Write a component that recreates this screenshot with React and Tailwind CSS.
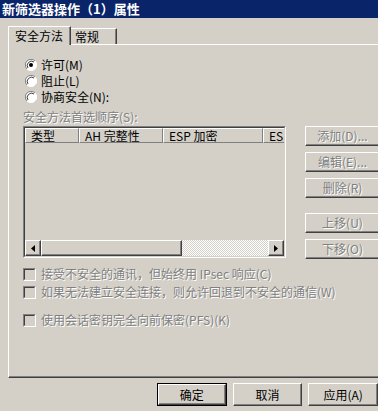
import React from "react";

const raised =
  "border border-t-white border-l-white border-r-[#404040] border-b-[#404040] shadow-[inset_-1px_-1px_0_#808080]";
const dis = "text-[#808080] [text-shadow:1px_1px_0_#fff]";

function Radio({ checked, label }) {
  return (
    <div className="flex items-center h-[16px] ml-[2px]">
      <svg width="12" height="12" viewBox="0 0 12 12" className="shrink-0">
        <circle cx="6" cy="6" r="5.5" fill="#fff" />
        <path d="M10 2 A5.5 5.5 0 0 0 2 10" stroke="#808080" strokeWidth="1" fill="none" />
        <path d="M9 3 A4.3 4.3 0 0 0 3 9" stroke="#404040" strokeWidth="1" fill="none" />
        <path d="M2 10 A5.5 5.5 0 0 0 10 2" stroke="#fff" strokeWidth="1" fill="none" />
        {checked && <circle cx="6" cy="6" r="2" fill="#000" />}
      </svg>
      <span className="ml-[4px] text-black">{label}</span>
    </div>
  );
}

function Check({ label, className = "" }) {
  return (
    <div className={`flex items-center h-[16px] ${className}`}>
      <div className="w-[13px] h-[13px] border border-t-[#808080] border-l-[#808080] border-b-white border-r-white shrink-0">
        <div className="w-full h-full border border-t-[#404040] border-l-[#404040] border-b-[#d4d0c8] border-r-[#d4d0c8]" />
      </div>
      <span className={`ml-[5px] ${dis}`}>{label}</span>
    </div>
  );
}

function SideButton({ label, className = "" }) {
  return (
    <div className={`w-[75px] h-[20px] flex items-center justify-center shrink-0 ${raised} ${className}`}>
      <span className={dis}>{label}</span>
    </div>
  );
}

function Arrow({ dir }) {
  return (
    <div className={`w-[16px] h-full flex items-center justify-center shrink-0 ${raised}`}>
      <svg width="4" height="7" viewBox="0 0 4 7">
        {dir === "left" ? <path d="M4 0 L0 3.5 L4 7 Z" fill="#000" /> : <path d="M0 0 L4 3.5 L0 7 Z" fill="#000" />}
      </svg>
    </div>
  );
}

export default function App() {
  const cols = [
    { label: "类型", w: "w-[54px]" },
    { label: "AH 完整性", w: "w-[84px]" },
    { label: "ESP 加密", w: "w-[100px]" },
    { label: "ESP 完整性", w: "w-[100px]" },
  ];

  return (
    <div
      className="w-[378px] h-[411px] bg-[#d4d0c8] overflow-hidden text-[12px] leading-[14px] text-black"
      style={{ fontFamily: '"Noto Sans CJK SC", "Liberation Sans", sans-serif' }}
    >
      <div className="h-[18px] bg-[#0a246a] text-white font-bold text-[13px] leading-[18px] pl-[2px] whitespace-nowrap">
        新筛选器操作（1）属性
      </div>

      <div className="pl-[8px] mt-[8px]">
        <div className="flex -mb-px relative z-10">
          <div className="h-[19px] w-[63px] bg-[#d4d0c8] border-t border-l border-t-white border-l-white border-r border-r-[#404040] shadow-[inset_-1px_0_0_#808080] flex items-center pl-[6px]">
            安全方法
          </div>
          <div className="mt-[2px] h-[16px] w-[46px] bg-[#d4d0c8] border-t border-r border-t-white border-r-[#404040] shadow-[inset_-1px_0_0_#808080] flex items-center pl-[4px]">
            常规
          </div>
        </div>

        <div className="w-[380px] h-[334px] border border-t-white border-l-white border-b-[#404040] border-r-[#404040] shadow-[inset_0_-1px_0_#808080] pl-[14px] flex flex-col">
          <div className="mt-[12px] flex flex-col">
            <Radio checked label="许可(M)" />
            <Radio label="阻止(L)" />
            <Radio label="协商安全(N):" />
          </div>
          <div className={`mt-[4px] h-[15px] leading-[15px] ${dis}`}>安全方法首选顺序(S):</div>

          <div className="mt-[2px] flex items-start">
            <div className="w-[263px] h-[132px] border border-t-[#808080] border-l-[#808080] border-b-white border-r-white flex">
              <div className="flex-1 border border-t-[#404040] border-l-[#404040] border-b-[#d4d0c8] border-r-[#d4d0c8] flex flex-col overflow-hidden">
                <div className="h-[15px] flex overflow-hidden shrink-0">
                  {cols.map((c) => (
                    <div
                      key={c.label}
                      className={`${c.w} shrink-0 h-full border-t border-l border-r border-b border-t-white border-l-white border-r-[#808080] border-b-[#808080] pl-[5px] flex items-center whitespace-nowrap`}
                    >
                      {c.label}
                    </div>
                  ))}
                </div>
                <div className="flex-1" />
                <div className="h-[16px] flex shrink-0">
                  <Arrow dir="left" />
                  <div className={`w-[141px] h-full ${raised}`} />
                  <div className="flex-1 h-full bg-[repeating-conic-gradient(#ffffff_0_25%,#d4d0c8_0_50%)] bg-[length:2px_2px]" />
                  <Arrow dir="right" />
                </div>
              </div>
            </div>

            <div className="ml-[19px] flex flex-col">
              <SideButton label="添加(D)..." />
              <SideButton label="编辑(E)..." className="mt-[6px]" />
              <SideButton label="删除(R)" className="mt-[6px]" />
              <SideButton label="上移(U)" className="mt-[15px]" />
              <SideButton label="下移(O)" className="mt-[6px]" />
            </div>
          </div>

          <Check className="mt-[7px]" label="接受不安全的通讯，但始终用 IPsec 响应(C)" />
          <Check className="mt-[2px]" label="如果无法建立安全连接，则允许回退到不安全的通信(W)" />
          <Check className="mt-[12px]" label="使用会话密钥完全向前保密(PFS)(K)" />
        </div>
      </div>

      <div className="mt-[5px] flex pl-[157px] gap-[6px]">
        <div className="w-[75px] h-[23px] border border-black">
          <div className={`w-full h-full flex items-center justify-center ${raised}`}>确定</div>
        </div>
        <div className={`w-[75px] h-[23px] flex items-center justify-center ${raised}`}>取消</div>
        <div className={`w-[75px] h-[23px] flex items-center justify-center ${raised}`}>应用(A)</div>
      </div>
    </div>
  );
}
